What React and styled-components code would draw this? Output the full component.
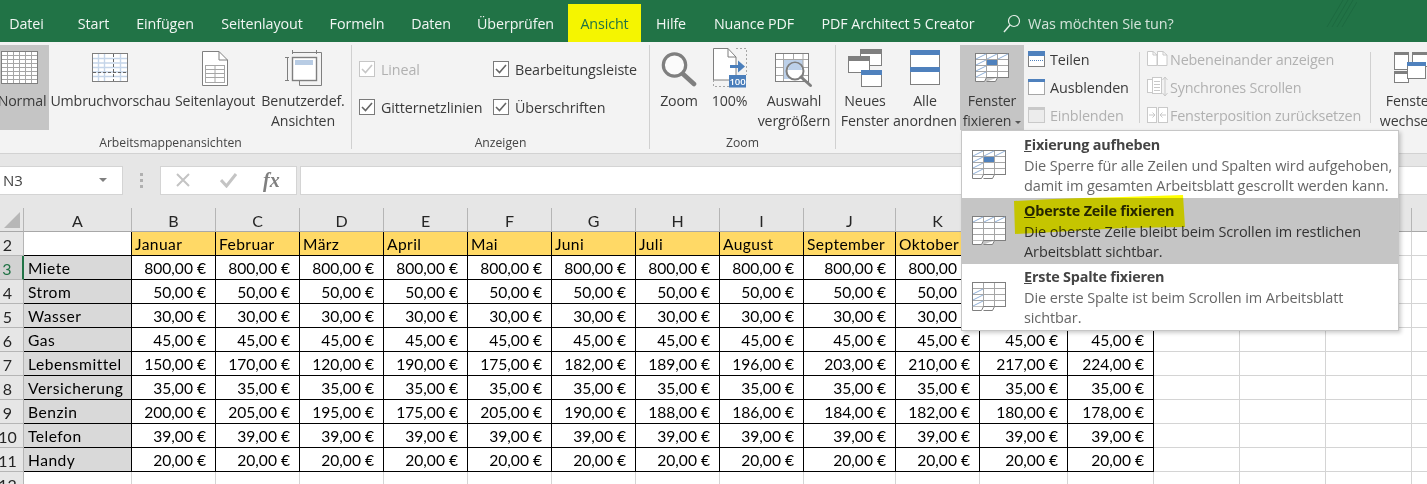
import React from 'react';
import styled, { createGlobalStyle } from 'styled-components';

const UI_FONT = '"Open Sans", "Noto Sans", sans-serif';
const CELL_FONT = 'Lato, "Open Sans", sans-serif';

const GlobalStyle = createGlobalStyle`
    html, body {
        margin: 0;
        padding: 0;
        background: #ffffff;
    }
    * {
        box-sizing: border-box;
    }
`;

const Page = styled.div`
    position: relative;
    width: 1427px;
    height: 484px;
    overflow: hidden;
    font-family: ${UI_FONT};
    color: #3b3b3b;
`;

/* title bar */
const TabBar = styled.div`
    position: relative;
    display: flex;
    align-items: stretch;
    height: 42px;
    background: #217346;
    padding-top: 4px;
`;

const Tab = styled.div`
    flex: none;
    width: ${(p) => p.$w}px;
    margin-left: ${(p) => p.$ml || 0}px;
    display: flex;
    align-items: center;
    justify-content: center;
    font-size: 14.3px;
    letter-spacing: -0.1px;
    white-space: nowrap;
    color: ${(p) => (p.$active ? '#217346' : '#f1f6f3')};
    background: ${(p) => (p.$active ? '#f5f500' : 'transparent')};
`;

const Tell = styled.div`
    display: flex;
    align-items: center;
    gap: 7px;
    margin-left: 14px;
    font-size: 14.4px;
    letter-spacing: -0.1px;
    color: #d3e3d9;
    white-space: nowrap;
`;

const Hatch = styled.svg`
    position: absolute;
    left: 1325px;
    top: 0;
`;

/* ribbon */
const Ribbon = styled.div`
    display: flex;
    height: 112px;
    background: #f3f3f3;
    border-bottom: 1px solid #d2d2d2;
    padding-top: 3px;
`;

const Group = styled.div`
    flex: none;
    position: relative;
    display: flex;
    flex-direction: column;
    width: ${(p) => p.$w}px;
    height: 104px;
    border-right: ${(p) => (p.$open ? 'none' : '1px solid #d0d0d0')};
`;

const GroupBody = styled.div`
    display: flex;
    gap: ${(p) => p.$gap || 0}px;
    height: 85px;
    padding-left: ${(p) => p.$pl || 0}px;
    margin-left: ${(p) => p.$ml || 0}px;
`;

const GroupLabel = styled.div`
    height: 19px;
    padding-top: 5px;
    font-size: 12.2px;
    line-height: 16px;
    text-align: center;
    color: #444444;
    transform: translateX(${(p) => p.$dx || 0}px);
`;

const BigButton = styled.div`
    flex: none;
    width: ${(p) => p.$w}px;
    height: 85px;
    margin-left: ${(p) => p.$ml || 0}px;
    display: flex;
    flex-direction: column;
    align-items: center;
    background: ${(p) => (p.$on ? '#c5c5c5' : 'transparent')};
    font-size: 14.2px;
    letter-spacing: -0.15px;
    line-height: 20px;
    color: #3b3b3b;
    white-space: nowrap;
    text-align: center;
`;

const IconSlot = styled.div`
    flex: none;
    height: 46px;
    display: flex;
    align-items: flex-start;
    justify-content: center;
    padding-top: ${(p) => p.$top || 0}px;
    transform: translateX(${(p) => p.$dx || 0}px);
`;

const Caret = styled.span`
    display: inline-block;
    margin-left: 4px;
    vertical-align: 2px;
    border-left: 3px solid transparent;
    border-right: 3px solid transparent;
    border-top: 3px solid #555555;
`;

const CheckGrid = styled.div`
    display: grid;
    grid-template-columns: 134px 1fr;
    grid-auto-rows: 38px;
    height: 85px;
    padding: 5px 0 0 7px;
`;

const CheckRow = styled.div`
    display: flex;
    align-items: center;
    gap: 6px;
    font-size: 14.3px;
    letter-spacing: -0.1px;
    white-space: nowrap;
    color: ${(p) => (p.$off ? '#b1b1b1' : '#3b3b3b')};
`;

const CheckBox = styled.span`
    flex: none;
    display: flex;
    align-items: center;
    justify-content: center;
    width: 16px;
    height: 16px;
    background: #ffffff;
    border: 1px solid ${(p) => (p.$off ? '#c6c6c6' : '#7a7a7a')};
`;

const SmallColumn = styled.div`
    flex: none;
    width: ${(p) => p.$w}px;
    margin-left: ${(p) => p.$ml || 0}px;
    display: flex;
    flex-direction: column;
`;

const ToolDivider = styled.div`
    flex: none;
    width: 1px;
    height: 71px;
    margin-top: 7px;
    background: #d0d0d0;
`;

const SmallRow = styled.div`
    flex: none;
    display: flex;
    align-items: center;
    height: 28px;
    gap: ${(p) => p.$gap || 5}px;
    font-size: 14.4px;
    letter-spacing: ${(p) => (p.$off ? -0.2 : -0.1)}px;
    white-space: nowrap;
    color: ${(p) => (p.$off ? '#b1b1b1' : '#3b3b3b')};
`;

/* formula bar */
const FormulaArea = styled.div`
    display: flex;
    align-items: center;
    height: 54px;
    background: #e6e6e6;
    padding: 0 0 2px 0;
`;

const NameBox = styled.div`
    flex: none;
    display: flex;
    align-items: center;
    justify-content: space-between;
    width: 123px;
    height: 29px;
    padding: 0 15px 0 3px;
    background: #ffffff;
    border: 1px solid #d4d4d4;
    border-left: none;
    font-size: 15px;
    color: #444444;
`;

const NameCaret = styled.span`
    border-left: 4px solid transparent;
    border-right: 4px solid transparent;
    border-top: 4px solid #7f7f7f;
`;

const Grip = styled.div`
    flex: none;
    display: flex;
    flex-direction: column;
    gap: 3px;
    width: 3px;
    margin: 0 17px 0 17px;
`;

const GripDot = styled.span`
    width: 3px;
    height: 3px;
    background: #b0b0b0;
`;

const FxBox = styled.div`
    flex: none;
    display: flex;
    align-items: center;
    width: 137px;
    height: 29px;
    padding-left: 14px;
    background: #ffffff;
    border: 1px solid #d4d4d4;
`;

const FxText = styled.span`
    margin-left: 25px;
    font-family: "Liberation Serif", serif;
    font-style: italic;
    font-weight: 700;
    font-size: 20px;
    color: #7f7f7f;
`;

const FormulaInput = styled.div`
    flex: 1;
    height: 29px;
    margin-left: 3px;
    background: #ffffff;
    border: 1px solid #d4d4d4;
    border-right: none;
`;

/* sheet */
const Sheet = styled.div`
    display: grid;
    grid-template-columns: ${(p) => p.$cols};
    grid-auto-rows: 24px;
    font-family: ${CELL_FONT};
    font-size: 15.6px;
    color: #000000;
`;

const Corner = styled.div`
    position: relative;
    background: #e6e6e6;
    border-right: 1px solid #b5b5b5;
    border-bottom: 1px solid #a8a8a8;
    &::after {
        content: '';
        position: absolute;
        right: 3px;
        bottom: 3px;
        border-left: 16px solid transparent;
        border-bottom: 16px solid #b7b7b7;
    }
`;

const ColHead = styled.div`
    display: flex;
    align-items: center;
    justify-content: center;
    padding-top: 1px;
    background: #e6e6e6;
    border-right: 1px solid #b5b5b5;
    border-bottom: 1px solid #a8a8a8;
    font-size: 16px;
    color: #262626;
`;

const RowHead = styled.div`
    display: flex;
    align-items: center;
    padding: 1px 8px 0 0;
    justify-content: center;
    background: ${(p) => (p.$on ? '#d2d2d2' : '#e6e6e6')};
    color: ${(p) => (p.$on ? '#217346' : '#262626')};
    border-right: ${(p) => (p.$on ? '2px solid #217346' : '1px solid #b5b5b5')};
    border-bottom: 1px solid #b5b5b5;
    font-size: 16px;
`;

const CELL_KIND = {
    blank: { bg: '#ffffff', line: '#000000', pad: '1px 0 0 3px', spacing: 0 },
    month: { bg: '#ffd966', line: '#000000', pad: '1px 0 0 3px', spacing: 0.4 },
    label: { bg: '#d9d9d9', line: '#000000', pad: '1px 0 0 4px', spacing: 0.5 },
    value: { bg: '#ffffff', line: '#000000', pad: '1px 9px 0 0', spacing: 0 },
    empty: { bg: '#ffffff', line: '#d4d4d4', pad: '0', spacing: 0 },
};

const Cell = styled.div`
    display: flex;
    align-items: center;
    white-space: nowrap;
    overflow: hidden;
    justify-content: ${(p) => (p.$kind === 'value' ? 'flex-end' : 'flex-start')};
    padding: ${(p) => CELL_KIND[p.$kind].pad};
    letter-spacing: ${(p) => CELL_KIND[p.$kind].spacing}px;
    background: ${(p) => CELL_KIND[p.$kind].bg};
    border-right: 1px solid ${(p) => CELL_KIND[p.$kind].line};
    border-bottom: 1px solid ${(p) => CELL_KIND[p.$kind].line};
`;

/* freeze dropdown */
const Menu = styled.div`
    position: absolute;
    left: 961px;
    top: 130px;
    width: 438px;
    height: 201px;
    padding-top: 1px;
    background: #ffffff;
    border: 1px solid #c6c6c6;
    box-shadow: 2px 2px 4px rgba(0, 0, 0, 0.2);
`;

const MenuItem = styled.div`
    display: flex;
    height: 66px;
    background: ${(p) => (p.$on ? '#c5c5c5' : 'transparent')};
    color: ${(p) => (p.$on ? '#333333' : '#666666')};
`;

const MenuIcon = styled.div`
    flex: none;
    width: 62px;
    padding: 18px 0 0 10px;
`;

const MenuText = styled.div`
    padding-top: 3px;
    font-size: 14.5px;
    letter-spacing: -0.1px;
    line-height: 20px;
    white-space: nowrap;
`;

const MenuTitle = styled.div`
    font-size: 14.4px;
    font-weight: 700;
    letter-spacing: -0.2px;
    margin-bottom: 1px;
    color: ${(p) => (p.$on ? '#262626' : '#444444')};
`;

const Key = styled.span`
    text-decoration: underline;
`;

const Marker = styled.svg`
    position: absolute;
    left: 51px;
    top: 64px;
    mix-blend-mode: multiply;
`;

/* icons */
const G = '#7f7f7f';
const BLUE = '#4f81bd';
const OFF = '#c9c9c9';

const range = (n) => Array.from({ length: n }, (_, i) => i);

const NormalIcon = () => (
    <svg width="38" height="34">
        <rect x="0.5" y="0.5" width="36" height="32" fill="#fff" stroke={G} />
        {range(5).map((i) => (
            <path key={i} d={`M${6.5 + i * 6} 1V32`} stroke="#a6a6a6" />
        ))}
        {range(7).map((i) => (
            <path key={i} d={`M1 ${4.5 + i * 4}H36`} stroke="#a6a6a6" />
        ))}
    </svg>
);

const BreakIcon = () => (
    <svg width="37" height="30">
        <rect x="0.5" y="0.5" width="35" height="28" fill="#fff" stroke={G} />
        {range(5).map((i) => (
            <path key={i} d={`M1 ${5.5 + i * 4.5}H35`} stroke="#c5d5e9" strokeWidth="1.4" />
        ))}
        {[6.5, 12.5, 28.5].map((x) => (
            <path key={x} d={`M${x} 1V28`} stroke="#c5d5e9" strokeWidth="1.4" />
        ))}
        <path d="M21.5 1V28M1 19.5H35" stroke="#666" strokeDasharray="3 2" />
    </svg>
);

const PageIcon = () => (
    <svg width="26" height="35">
        <path d="M.5 .5H17L25.5 9V34.5H.5Z" fill="#fff" stroke={G} />
        <path d="M17 .5V9H25.5" fill="none" stroke={G} />
        <rect x="3.5" y="14.5" width="19" height="17" fill="#fff" stroke="#a6a6a6" />
        <path d="M13 15V31M4 18.5H22M4 22.5H22M4 26.5H22" stroke="#a6a6a6" />
    </svg>
);

const CustomIcon = () => (
    <svg width="37" height="37">
        <path d="M7.5 0V4M31.5 0V4M7.5 2.5H31.5" stroke={G} fill="none" />
        <path d="M0 7.5H4M0 30.5H4M2.5 7.5V30.5" stroke={G} fill="none" />
        <path d="M31 2.5H36.5V35.5H14.5V31" stroke={G} fill="none" />
        <rect x="7.5" y="7.5" width="24" height="23" fill="#fff" stroke={G} strokeWidth="1.4" />
        <rect x="10" y="10" width="18" height="5" fill="#b8cce4" />
    </svg>
);

const ZoomIcon = () => (
    <svg width="36" height="37">
        <circle cx="13.5" cy="14" r="11.2" fill="#fbfbfb" stroke={G} strokeWidth="3.2" />
        <path d="M22 23L33 33" stroke={G} strokeWidth="4.6" strokeLinecap="round" />
    </svg>
);

const HundredIcon = () => (
    <svg width="36" height="40">
        <path d="M.5 .5H15L23 9V32H.5Z" fill="#fff" stroke={G} />
        <path d="M15 .5V9H23" fill="none" stroke={G} />
        <path d="M23 .5H33.5V27M.5 32V38.5H16" fill="none" stroke="#a6a6a6" strokeDasharray="2 2" />
        <path d="M17 18.5H28" stroke="#4a7ebb" strokeWidth="3" />
        <path d="M25 12.5L32 18.5L25 24.5Z" fill="#4a7ebb" />
        <rect x="16" y="27" width="17" height="12.5" fill="#4a7ebb" />
        <text x="24.5" y="37" textAnchor="middle" fontSize="9.5" fontWeight="600" fill="#fff" fontFamily={UI_FONT}>
            100
        </text>
    </svg>
);

const SelectionIcon = () => (
    <svg width="38" height="35">
        <rect x="0.5" y="0.5" width="33" height="28" fill="#fff" stroke={G} />
        <rect x="8" y="6" width="20" height="20" fill="#bcd0e9" />
        <path d="M8.5 1V28M18.5 1V6M28 1V28M1 6.5H33M1 14.5H8M28 14.5H33M1 22.5H8M28 22.5H33" stroke="#a6a6a6" />
        <circle cx="20" cy="18" r="8.5" fill="#fff" stroke={G} strokeWidth="2" />
        <path d="M13 17A7 7 0 0 1 27 17Z" fill="#bcd0e9" />
        <path d="M26 24L35.5 32.5" stroke={G} strokeWidth="3" strokeLinecap="round" />
    </svg>
);

const MiniWindow = ({ x, y, w, h, bar }) => (
    <g>
        <rect x={x + 0.5} y={y + 0.5} width={w} height={h} fill="#fff" stroke={G} />
        <rect x={x} y={y} width={w + 1} height="5" fill={bar} />
    </g>
);

const NewWindowIcon = () => (
    <svg width="35" height="39">
        <MiniWindow x={12} y={0} w={21} h={16} bar={G} />
        <MiniWindow x={0} y={7} w={21} h={16} bar={G} />
        <MiniWindow x={13} y={21} w={20} h={16} bar={BLUE} />
    </svg>
);

const ArrangeIcon = () => (
    <svg width="31" height="36">
        <rect x="0.5" y="0.5" width="29" height="34" fill="#fff" stroke={G} />
        <rect x="0" y="0" width="30" height="5" fill={BLUE} />
        <rect x="0" y="17" width="30" height="5" fill={BLUE} />
    </svg>
);

const SwitchIcon = () => (
    <svg width="34" height="32">
        <rect x="0.5" y="0.5" width="14" height="17" fill="#fff" stroke={G} />
        <rect x="0" y="0" width="15" height="3" fill={G} />
        <rect x="18.5" y="0.5" width="15" height="14" fill="#fff" stroke={G} />
        <rect x="18" y="0" width="16" height="3" fill={G} />
        <rect x="0.5" y="19.5" width="14" height="11" fill="#fff" stroke={G} />
        <rect x="0" y="19" width="15" height="3" fill={G} />
        <rect x="13.5" y="10.5" width="18" height="16" fill="#fff" stroke={G} />
        <rect x="13" y="10" width="19" height="4" fill={BLUE} />
    </svg>
);

// hatch is the light blue diagonal pattern in the frozen row and column
const FreezeIcon = ({ mode }) => {
    const row = mode === 'both' || mode === 'row';
    const col = mode === 'both' || mode === 'col';
    return (
        <svg width="34" height="30">
            <rect x="0.5" y="0.5" width="33" height="24" fill="#fff" stroke={G} />
            <path d="M.5 24.5V28.5H9.5L11.5 24.5M11.5 28.5H20.5L22.5 24.5" fill="#fff" stroke={G} />
            <path d="M11.5 1V24M22.5 1V24M1 6.5H33M1 12.5H33M1 18.5H33" stroke="#a6a6a6" />
            {row && <path d="M1 6L11 1M12 6L22 1M23 6L33 1" stroke="#8fb0d8" />}
            {col && <path d="M1 12L11 7M1 18L11 13M1 24L11 19" stroke="#8fb0d8" />}
            {mode === 'both' && <rect x="12" y="7" width="10" height="5" fill={BLUE} />}
        </svg>
    );
};

const SplitIcon = () => (
    <svg width="17" height="17">
        <rect x="0.5" y="0.5" width="16" height="15" fill="#fff" stroke={G} />
        <rect x="0" y="0" width="17" height="5" fill={BLUE} />
        <path d="M2 9.5H15" stroke={BLUE} strokeDasharray="1 1" />
    </svg>
);

const HideIcon = () => (
    <svg width="17" height="17">
        <rect x="0.5" y="0.5" width="16" height="15" fill="#fff" stroke="#555" strokeDasharray="1 1" />
        <rect x="0" y="0" width="17" height="3" fill={BLUE} />
    </svg>
);

const UnhideIcon = () => (
    <svg width="17" height="17">
        <rect x="0.5" y="0.5" width="16" height="15" fill="#ececec" stroke={OFF} />
        <rect x="0" y="0" width="17" height="3" fill={OFF} />
    </svg>
);

const SideBySideIcon = () => (
    <svg width="21" height="16">
        <path d="M.5 .5H6L10 4V14.5H.5ZM10.5 .5H16L20 4V14.5H10.5Z" fill="#fff" stroke={OFF} />
        <path d="M6 .5V4H10M16 .5V4H20" fill="none" stroke={OFF} />
    </svg>
);

const SyncIcon = () => (
    <svg width="21" height="22">
        <rect x="0.5" y="3.5" width="5" height="13" fill="#fff" stroke={OFF} />
        <rect x="5.5" y="1.5" width="9" height="16" fill="#fff" stroke={OFF} />
        <path d="M7 5.5H13M7 8.5H13M7 11.5H13M7 14.5H13" stroke={OFF} />
        <path d="M18 1V20M15.5 4L18 1L20.5 4M15.5 17L18 20L20.5 17" fill="none" stroke={OFF} />
    </svg>
);

const ResetIcon = () => (
    <svg width="21" height="17">
        <rect x="0.5" y="0.5" width="9" height="15" fill="#fff" stroke={OFF} />
        <rect x="11.5" y="0.5" width="9" height="15" fill="#fff" stroke={OFF} />
        <path d="M2 8H8M5.5 5.5L8 8L5.5 10.5M19 8H13M15.5 5.5L13 8L15.5 10.5" fill="none" stroke={OFF} />
    </svg>
);

const Tick = ({ color }) => (
    <svg width="12" height="10">
        <path d="M1 5L4.5 8.5L11 1" fill="none" stroke={color} strokeWidth="1.6" />
    </svg>
);

const SearchIcon = () => (
    <svg width="18" height="19">
        <circle cx="11" cy="7" r="5.5" fill="none" stroke="#e6efe9" strokeWidth="1.2" />
        <path d="M7 11L1 18" stroke="#e6efe9" strokeWidth="1.4" />
    </svg>
);

const CancelGlyph = () => (
    <svg width="16" height="16">
        <path d="M2 2L14 14M14 2L2 14" stroke="#c4c4c4" strokeWidth="2" />
    </svg>
);

const AcceptGlyph = styled(({ className }) => (
    <svg className={className} width="18" height="16">
        <path d="M1 8L6.5 14L16 2" fill="none" stroke="#c4c4c4" strokeWidth="3" />
    </svg>
))`
    margin-left: 29px;
`;

/* data */
const TABS = [
    ['Datei', 67, -7],
    ['Start', 67],
    ['Einfügen', 76],
    ['Seitenlayout', 118],
    ['Formeln', 72],
    ['Daten', 76],
    ['Überprüfen', 93],
];

const TABS_AFTER = [
    ['Hilfe', 60],
    ['Nuance PDF', 106],
    ['PDF Architect 5 Creator', 182],
];

const COL_WIDTHS = [24, 108, 84, 84, 84, 84, 84, 84, 84, 84, 92, 84, 88, 86, 86, 86, 86, 86];
const COL_NAMES = 'ABCDEFGHIJKLMNOPQ'.split('');

const MONTHS = ['Januar', 'Februar', 'März', 'April', 'Mai', 'Juni', 'Juli', 'August', 'September', 'Oktober', 'November', 'Dezember'];

const fill = (v) => range(12).map(() => v);

const ROWS = [
    ['Miete', fill(800)],
    ['Strom', fill(50)],
    ['Wasser', fill(30)],
    ['Gas', fill(45)],
    ['Lebensmittel', [150, 170, 120, 190, 175, 182, 189, 196, 203, 210, 217, 224]],
    ['Versicherung', fill(35)],
    ['Benzin', [200, 205, 195, 175, 205, 190, 188, 186, 184, 182, 180, 178]],
    ['Telefon', fill(39)],
    ['Handy', fill(20)],
];

const EXTRA_COLS = range(4);

const FreezeMenu = () => (
    <Menu>
        <MenuItem>
            <MenuIcon><FreezeIcon mode="both" /></MenuIcon>
            <MenuText>
                <MenuTitle><Key>F</Key>ixierung aufheben</MenuTitle>
                Die Sperre für alle Zeilen und Spalten wird aufgehoben,
                <br />
                damit im gesamten Arbeitsblatt gescrollt werden kann.
            </MenuText>
        </MenuItem>
        <MenuItem $on>
            <MenuIcon><FreezeIcon mode="row" /></MenuIcon>
            <MenuText>
                <MenuTitle $on><Key>O</Key>berste Zeile fixieren</MenuTitle>
                Die oberste Zeile bleibt beim Scrollen im restlichen
                <br />
                Arbeitsblatt sichtbar.
            </MenuText>
        </MenuItem>
        <MenuItem>
            <MenuIcon><FreezeIcon mode="col" /></MenuIcon>
            <MenuText>
                <MenuTitle><Key>E</Key>rste Spalte fixieren</MenuTitle>
                Die erste Spalte ist beim Scrollen im Arbeitsblatt
                <br />
                sichtbar.
            </MenuText>
        </MenuItem>
        <Marker width="172" height="41">
            <path d="M1 6L40 4L70 3L110 2L170 0L172 32L110 33L60 36L2 39Z" fill="#ffff00" />
        </Marker>
    </Menu>
);

const App = () => {
    return (
        <Page>
            <GlobalStyle />
            <TabBar>
                {TABS.map(([name, w, ml]) => (
                    <Tab key={name} $w={w} $ml={ml}>{name}</Tab>
                ))}
                <Tab $w={73} $ml={6} $active>Ansicht</Tab>
                {TABS_AFTER.map(([name, w]) => (
                    <Tab key={name} $w={w}>{name}</Tab>
                ))}
                <Tell>
                    <SearchIcon />
                    Was möchten Sie tun?
                </Tell>
                <Hatch width="32" height="28">
                    <path d="M2 27L18 0M7 27L23 0M12 27L28 0M17 27L32 2" stroke="#1d6a40" />
                </Hatch>
            </TabBar>

            <Ribbon>
                <Group $w={352}>
                    <GroupBody $gap={2} $ml={-5}>
                        <BigButton $w={54} $on>
                            <IconSlot $top={6} $dx={-2}><NormalIcon /></IconSlot>
                            Normal
                        </BigButton>
                        <BigButton $w={119}>
                            <IconSlot $top={8}><BreakIcon /></IconSlot>
                            Umbruchvorschau
                        </BigButton>
                        <BigButton $w={86}>
                            <IconSlot $top={6}><PageIcon /></IconSlot>
                            Seitenlayout
                        </BigButton>
                        <BigButton $w={86}>
                            <IconSlot $top={5}><CustomIcon /></IconSlot>
                            Benutzerdef.
                            <br />
                            Ansichten
                        </BigButton>
                    </GroupBody>
                    <GroupLabel $dx={-5}>Arbeitsmappenansichten</GroupLabel>
                </Group>

                <Group $w={298}>
                    <CheckGrid>
                        <CheckRow $off>
                            <CheckBox $off><Tick color="#c6c6c6" /></CheckBox>
                            Lineal
                        </CheckRow>
                        <CheckRow>
                            <CheckBox><Tick color="#666" /></CheckBox>
                            Bearbeitungsleiste
                        </CheckRow>
                        <CheckRow>
                            <CheckBox><Tick color="#666" /></CheckBox>
                            Gitternetzlinien
                        </CheckRow>
                        <CheckRow>
                            <CheckBox><Tick color="#666" /></CheckBox>
                            Überschriften
                        </CheckRow>
                    </CheckGrid>
                    <GroupLabel>Anzeigen</GroupLabel>
                </Group>

                <Group $w={186}>
                    <GroupBody $pl={5} $gap={4}>
                        <BigButton $w={48}>
                            <IconSlot $top={6}><ZoomIcon /></IconSlot>
                            Zoom
                        </BigButton>
                        <BigButton $w={45}>
                            <IconSlot $top={3} $dx={1}><HundredIcon /></IconSlot>
                            100%
                        </BigButton>
                        <BigButton $w={76}>
                            <IconSlot $top={8}><SelectionIcon /></IconSlot>
                            Auswahl
                            <br />
                            vergrößern
                        </BigButton>
                    </GroupBody>
                    <GroupLabel>Zoom</GroupLabel>
                </Group>

                <Group $w={600} $open>
                    <GroupBody $pl={4}>
                        <BigButton $w={50}>
                            <IconSlot $top={4}><NewWindowIcon /></IconSlot>
                            Neues
                            <br />
                            Fenster
                        </BigButton>
                        <BigButton $w={66} $ml={2}>
                            <IconSlot $top={5}><ArrangeIcon /></IconSlot>
                            Alle
                            <br />
                            anordnen
                        </BigButton>
                        <BigButton $w={64} $ml={2} $on>
                            <IconSlot $top={8}><FreezeIcon mode="both" /></IconSlot>
                            Fenster
                            <br />
                            <span>fixieren<Caret /></span>
                        </BigButton>
                        <SmallColumn $w={111} $ml={4}>
                            <SmallRow><SplitIcon />Teilen</SmallRow>
                            <SmallRow><HideIcon />Ausblenden</SmallRow>
                            <SmallRow $off><UnhideIcon />Einblenden</SmallRow>
                        </SmallColumn>
                        <ToolDivider />
                        <SmallColumn $w={223} $ml={7}>
                            <SmallRow $off $gap={2}><SideBySideIcon />Nebeneinander anzeigen</SmallRow>
                            <SmallRow $off $gap={2}><SyncIcon />Synchrones Scrollen</SmallRow>
                            <SmallRow $off $gap={2}><ResetIcon />Fensterposition zurücksetzen</SmallRow>
                        </SmallColumn>
                        <ToolDivider />
                        <BigButton $w={68} $ml={5}>
                            <IconSlot $top={7} $dx={1}><SwitchIcon /></IconSlot>
                            Fenster
                            <br />
                            wechseln
                        </BigButton>
                    </GroupBody>
                </Group>
            </Ribbon>

            <FormulaArea>
                <NameBox>N3<NameCaret /></NameBox>
                <Grip><GripDot /><GripDot /><GripDot /></Grip>
                <FxBox>
                    <CancelGlyph />
                    <AcceptGlyph />
                    <FxText>fx</FxText>
                </FxBox>
                <FormulaInput />
            </FormulaArea>

            <Sheet $cols={COL_WIDTHS.map((w) => `${w}px`).join(' ')}>
                <Corner />
                {COL_NAMES.map((c) => <ColHead key={c}>{c}</ColHead>)}

                <RowHead>2</RowHead>
                <Cell $kind="blank" />
                {MONTHS.map((m) => <Cell key={m} $kind="month">{m}</Cell>)}
                {EXTRA_COLS.map((i) => <Cell key={i} $kind="empty" />)}

                {ROWS.map(([label, values], r) => (
                    <React.Fragment key={label}>
                        <RowHead $on={r === 0}>{r + 3}</RowHead>
                        <Cell $kind="label">{label}</Cell>
                        {values.map((v, i) => (
                            <Cell key={i} $kind="value">{v},00 €</Cell>
                        ))}
                        {EXTRA_COLS.map((i) => <Cell key={i} $kind="empty" />)}
                    </React.Fragment>
                ))}

                <RowHead>12</RowHead>
                {COL_NAMES.map((c) => <Cell key={c} $kind="empty" />)}
            </Sheet>

            <FreezeMenu />
        </Page>
    );
};

export default App;
